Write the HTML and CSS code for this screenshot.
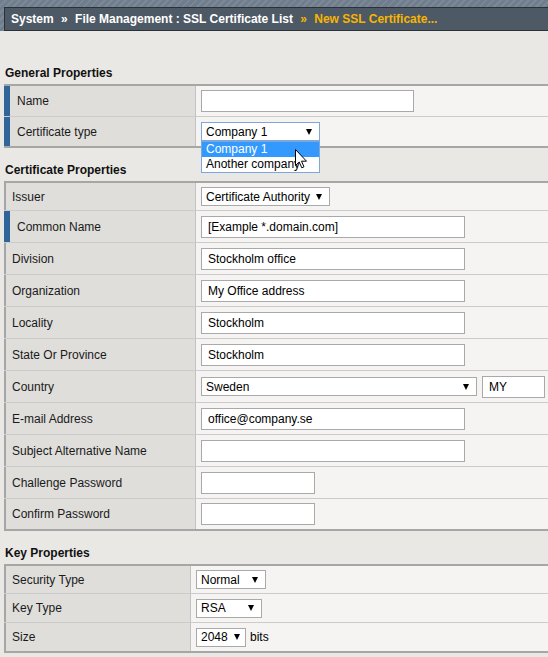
FILE: index.html
```html
<!DOCTYPE html>
<html lang="en">
<head>
  <meta charset="UTF-8" />
  <title>New SSL Certificate</title>
  <link rel="stylesheet" href="styles.css">
</head>
<body>
  <!-- breadcrumb bar -->
  <div class="topstrip">
    <div class="crumbs">
      <span>System</span>
      <span class="sep">»</span>
      <span>File Management : SSL Certificate List</span>
      <span class="sep current">»</span>
      <span class="current">New SSL Certificate...</span>
    </div>
  </div>

  <div class="content">
    <!-- General -->
    <h3 class="section">General Properties</h3>
    <div class="props">
      <div class="row r31">
        <div class="label req">Name</div>
        <div class="value"><input class="txt w213" type="text"></div>
      </div>
      <div class="row r29">
        <div class="label req">Certificate type</div>
        <div class="value">
          <div class="select w119 focused">
            <span>Company 1</span><i class="arrow"></i>
            <ul class="dropdown">
              <li class="hl">Company 1</li>
              <li>Another company</li>
            </ul>
            <svg class="cursor" width="13" height="20" viewBox="0 0 13 20">
              <path d="M0.5 0.5 L0.5 16.5 L4.2 13 L6.8 18.8 L9 17.8 L6.5 12.2 L11.5 12.2 Z" fill="#fff" stroke="#000" stroke-width="1"/>
            </svg>
          </div>
        </div>
      </div>
    </div>

    <!-- Certificate -->
    <h3 class="section">Certificate Properties</h3>
    <div class="props">
      <div class="row r28">
        <div class="label">Issuer</div>
        <div class="value"><div class="select w129"><span>Certificate Authority</span><i class="arrow"></i></div></div>
      </div>
      <div class="row">
        <div class="label req">Common Name</div>
        <div class="value"><input class="txt w264" type="text" value="[Example *.domain.com]"></div>
      </div>
      <div class="row">
        <div class="label">Division</div>
        <div class="value"><input class="txt w264" type="text" value="Stockholm office"></div>
      </div>
      <div class="row">
        <div class="label">Organization</div>
        <div class="value"><input class="txt w264" type="text" value="My Office address"></div>
      </div>
      <div class="row">
        <div class="label">Locality</div>
        <div class="value"><input class="txt w264" type="text" value="Stockholm"></div>
      </div>
      <div class="row">
        <div class="label">State Or Province</div>
        <div class="value"><input class="txt w264" type="text" value="Stockholm"></div>
      </div>
      <div class="row">
        <div class="label">Country</div>
        <div class="value">
          <div class="select w276"><span>Sweden</span><i class="arrow"></i></div>
          <input class="txt w63 code" type="text" value="MY">
        </div>
      </div>
      <div class="row">
        <div class="label">E-mail Address</div>
        <div class="value"><input class="txt w264" type="text" value="office@company.se"></div>
      </div>
      <div class="row">
        <div class="label">Subject Alternative Name</div>
        <div class="value"><input class="txt w264" type="text"></div>
      </div>
      <div class="row">
        <div class="label">Challenge Password</div>
        <div class="value"><input class="txt w114" type="password"></div>
      </div>
      <div class="row r30">
        <div class="label">Confirm Password</div>
        <div class="value"><input class="txt w114" type="password"></div>
      </div>
    </div>

    <!-- Key -->
    <h3 class="section">Key Properties</h3>
    <div class="props narrow">
      <div class="row r28">
        <div class="label">Security Type</div>
        <div class="value"><div class="select w70"><span>Normal</span><i class="arrow"></i></div></div>
      </div>
      <div class="row r29">
        <div class="label">Key Type</div>
        <div class="value"><div class="select w66"><span>RSA</span><i class="arrow"></i></div></div>
      </div>
      <div class="row r28">
        <div class="label">Size</div>
        <div class="value"><div class="select w50"><span>2048</span><i class="arrow"></i></div><span class="unit">bits</span></div>
      </div>
    </div>
  </div>
</body>
</html>
```

FILE: styles.css
```css
body { margin: 0; background: #e9e8e4; font-family: "Liberation Sans", Arial, sans-serif; font-size: 12px; color: #1a1a1a; overflow: hidden; }

/* top bar */
.topstrip { padding: 7px 0 0 4px; background: repeating-linear-gradient(135deg, #6f7d8c 0, #6f7d8c 3px, #7a8897 3px, #7a8897 5px); }
.crumbs { height: 22px; line-height: 22px; background: #4e5966; border: 1px solid #2c3137; border-right: none; padding-left: 6px; color: #fff; font-weight: bold; white-space: nowrap; }
.crumbs .sep { margin: 0 4px; }
.crumbs .current { color: #f7b500; }

.content { padding-top: 20px; }
.section { margin: 0; padding: 15px 0 3px 5px; height: 15px; line-height: 15px; font-size: 12px; font-weight: bold; color: #111; }

/* property tables */
.props { margin-left: 4px; border-top: 2px solid #a6a6a6; border-bottom: 2px solid #a6a6a6; }
.row { display: flex; height: 32px; box-sizing: border-box; border-bottom: 1px solid #cbcbcb; }
.row:last-child { border-bottom: none; }
.row.r28 { height: 28px; }
.row.r29 { height: 29px; }
.row.r30 { height: 30px; }
.row.r31 { height: 31px; }
.label { width: 192px; flex: none; box-sizing: border-box; background: #dfdedb; border-left: 2px solid #a6a6a6; border-right: 1px solid #c2c2c2; padding-left: 6px; display: flex; align-items: center; }
.label.req { border-left: 6px solid #30659a; padding-left: 7px; }
.narrow .label { width: 187px; }
.value { flex: 1; background: #f5f4f2; padding-left: 5px; display: flex; align-items: center; }

.txt { box-sizing: border-box; height: 22px; border: 1px solid #a9a9a9; background: #fff; padding: 0 6px; font-family: inherit; font-size: 12px; color: #000; margin: 0; outline: none; }
.txt.code { margin-left: 5px; }
.w50 { width: 50px; } .w63 { width: 63px; } .w66 { width: 66px; } .w70 { width: 70px; }
.w114 { width: 114px; } .w119 { width: 119px; } .w129 { width: 129px; }
.w213 { width: 213px; } .w264 { width: 264px; } .w276 { width: 276px; }

.select { position: relative; box-sizing: border-box; height: 19px; border: 1px solid #a9a9a9; background: #fff; padding: 0 7px 0 4px; display: flex; align-items: center; justify-content: space-between; color: #000; white-space: nowrap; }
.select.focused { border-color: #7ea6d9; }
.arrow { width: 0; height: 0; border-left: 3.5px solid transparent; border-right: 3.5px solid transparent; border-top: 6px solid #000; margin-left: 6px; }
.unit { margin-left: 4px; color: #000; }

.dropdown { position: absolute; top: 18px; left: -1px; width: 119px; box-sizing: border-box; margin: 0; padding: 0; list-style: none; background: #fff; border: 1px solid #7ea6d9; z-index: 5; }
.dropdown li { height: 15px; line-height: 15px; padding-left: 4px; }
.dropdown li.hl { background: #3399ff; color: #fff; }
.cursor { position: absolute; left: 93px; top: 26px; z-index: 6; }
```
